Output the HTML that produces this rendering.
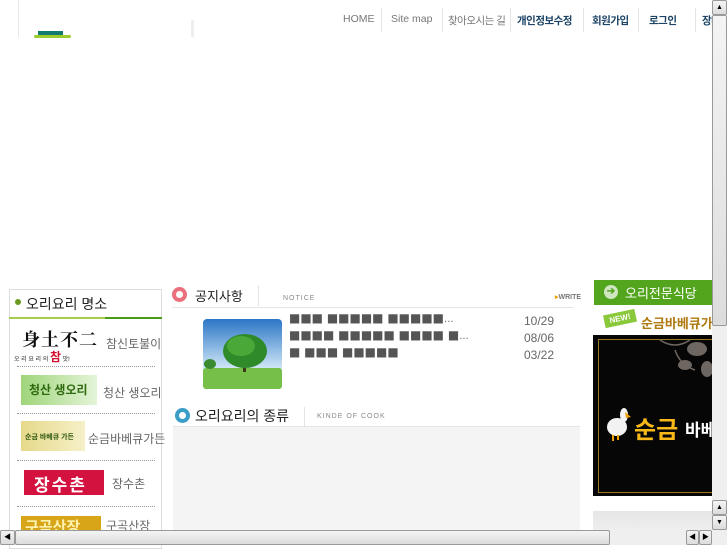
<!DOCTYPE html>
<html><head><meta charset="utf-8"><style>
*{margin:0;padding:0;box-sizing:border-box}
body{width:727px;height:545px;overflow:hidden;background:#fff;position:relative;font-family:"Liberation Sans","Noto Sans CJK KR",sans-serif;}
.a{position:absolute;white-space:nowrap}
.nav{font-size:10.5px;top:13px;color:#777}
.navb{font-size:10.5px;top:13px;color:#1d4466;font-weight:bold;letter-spacing:-0.5px}
.sep{position:absolute;top:8px;width:1px;height:24px;background:#e4e4e4}
.dot{position:absolute;left:17px;width:138px;border-top:1px dotted #999}
.it{font-size:12px;color:#666}
.sq{font-size:12px;color:#555;letter-spacing:0px;font-family:"DejaVu Sans",sans-serif;line-height:14px}
.dt{font-size:12px;color:#666}
.sb{background:linear-gradient(#f4f4f4,#dcdcdc);border:1px solid #999;border-radius:2px;position:absolute}
</style></head><body>
<!-- header -->
<div class="a" style="left:18px;top:0;width:1px;height:37px;background:#e8e8e8"></div>
<div class="a" style="left:38px;top:31px;width:25px;height:4px;background:#127a6e"></div>
<div class="a" style="left:34px;top:35px;width:37px;height:3px;background:#9ccc2c;border-radius:2px"></div>
<div class="a" style="left:191px;top:20px;width:3px;height:17px;background:#eee"></div>
<div class="a nav" style="left:343px">HOME</div>
<div class="sep" style="left:381px"></div>
<div class="a nav" style="left:391px">Site map</div>
<div class="sep" style="left:442px"></div>
<div class="a nav" style="left:448px;letter-spacing:-0.5px">찾아오시는 길</div>
<div class="sep" style="left:510px"></div>
<div class="a navb" style="left:517px">개인정보수정</div>
<div class="sep" style="left:583px"></div>
<div class="a navb" style="left:592px">회원가입</div>
<div class="sep" style="left:638px"></div>
<div class="a navb" style="left:649px">로그인</div>
<div class="sep" style="left:695px"></div>
<div class="a navb" style="left:702px">장바</div>

<!-- left box -->
<div class="a" style="left:9px;top:289px;width:153px;height:260px;border:1px solid #ddd;background:#fff"></div>
<div class="a" style="left:15px;top:299px;width:6px;height:6px;border-radius:50%;background:#6a9a1e"></div>
<div class="a" style="left:26px;top:294px;font-size:14px;color:#222">오리요리 명소</div>
<div class="a" style="left:9px;top:317px;width:96px;height:2px;background:#a8cf4c"></div>
<div class="a" style="left:105px;top:317px;width:57px;height:2px;background:#4a9a1a"></div>
<div class="a" style="left:22px;top:326px;font-size:18px;font-weight:bold;color:#111;font-family:'Noto Serif CJK SC',serif;letter-spacing:1px">身土不二</div>
<div class="a" style="left:14px;top:348px;font-size:6px;color:#222">오 리 요 리 의 <span style="color:#d0102e;font-size:12px;font-weight:bold">참</span> 맛!</div>
<div class="a it" style="left:106px;top:335px">참신토불이</div>
<div class="dot" style="top:366px"></div>
<div class="a" style="left:21px;top:375px;width:76px;height:30px;background:linear-gradient(90deg,#9fd57a,#e4f4d8);color:#2f6a10;font-size:12px;font-weight:bold;padding:6px 0 0 8px">청산 생오리</div>
<div class="a it" style="left:103px;top:384px">청산 생오리</div>
<div class="dot" style="top:413px"></div>
<div class="a" style="left:21px;top:421px;width:64px;height:30px;background:linear-gradient(90deg,#e6d98a,#f6f0c8);color:#2f5a10;font-size:7px;font-weight:bold;padding:11px 0 0 4px">순금 바베큐 가든</div>
<div class="a it" style="left:88px;top:430px">순금바베큐가든</div>
<div class="dot" style="top:460px"></div>
<div class="a" style="left:24px;top:470px;width:80px;height:25px;background:#d4123f;color:#fff;font-size:17px;font-weight:bold;padding:1px 0 0 10px;letter-spacing:2px">장수촌</div>
<div class="a it" style="left:112px;top:475px">장수촌</div>
<div class="dot" style="top:506px"></div>
<div class="a" style="left:21px;top:516px;width:80px;height:14px;background:#d8a418;overflow:hidden;color:#fff3b0;font-size:15px;font-weight:bold;padding:0 0 0 4px">구곡산장</div>
<div class="a it" style="left:106px;top:517px">구곡산장</div>

<!-- notice -->
<div class="a" style="left:172px;top:287px;width:15px;height:15px;border-radius:50%;border:4px solid #e9707c;background:#fff"></div>
<div class="a" style="left:195px;top:286px;font-size:13px;color:#222">공지사항</div>
<div class="a" style="left:258px;top:285px;width:1px;height:21px;background:#e4e4e4"></div>
<div class="a" style="left:283px;top:295px;font-size:7px;color:#888;letter-spacing:1px">NOTICE</div>
<div class="a" style="left:555px;top:293px;font-size:7px;color:#777;font-weight:bold"><span style="color:#f0a000">▸</span>WRITE</div>
<div class="a" style="left:172px;top:307px;width:402px;height:1px;background:#e6e6e6"></div>
<svg class="a" style="left:203px;top:319px" width="79" height="70"><defs><linearGradient id="s" x1="0" y1="0" x2="0" y2="1"><stop offset="0" stop-color="#2b76c6"/><stop offset=".7" stop-color="#cfe6f6"/></linearGradient></defs><rect width="79" height="70" rx="4" fill="url(#s)"/><rect y="49" width="79" height="21" rx="3" fill="#76c04a"/><rect x="40" y="35" width="3" height="18" fill="#3a3a1a"/><ellipse cx="42" cy="32" rx="22" ry="17" fill="#2f8a2a"/><ellipse cx="38" cy="27" rx="14" ry="10" fill="#4aa838"/><ellipse cx="7" cy="45" rx="6" ry="5" fill="#3a8a30"/></svg>
<div class="a sq" style="left:289px;top:311px">■■■ ■■■■■ ■■■■■<span style="color:#666;font-size:10px">...</span></div>
<div class="a sq" style="left:289px;top:328px">■■■■ ■■■■■ ■■■■ ■<span style="color:#666;font-size:10px">...</span></div>
<div class="a sq" style="left:289px;top:345px">■ ■■■ ■■■■■</div>
<div class="a dt" style="left:524px;top:314px">10/29</div>
<div class="a dt" style="left:524px;top:331px">08/06</div>
<div class="a dt" style="left:524px;top:348px">03/22</div>

<div class="a" style="left:175px;top:408px;width:15px;height:15px;border-radius:50%;border:4px solid #3a9ec8;background:#fff"></div>
<div class="a" style="left:195px;top:406px;font-size:14px;color:#222">오리요리의 종류</div>
<div class="a" style="left:304px;top:407px;width:1px;height:19px;background:#e4e4e4"></div>
<div class="a" style="left:317px;top:413px;font-size:7px;color:#888;letter-spacing:1px">KINDE OF COOK</div>
<div class="a" style="left:173px;top:426px;width:407px;height:1px;background:#e6e6e6"></div>
<div class="a" style="left:173px;top:427px;width:407px;height:103px;background:#f4f4f4"></div>

<!-- right -->
<div class="a" style="left:594px;top:280px;width:118px;height:25px;background:#52a51c"></div>
<div class="a" style="left:604px;top:285px;width:14px;height:14px;border-radius:50%;background:#cfe6c0;color:#52a51c;font-size:10px;font-weight:bold;text-align:center;line-height:14px">➔</div>
<div class="a" style="left:625px;top:283px;font-size:13px;color:#fff">오리전문식당</div>
<div class="a" style="left:604px;top:312px;width:32px;height:13px;background:#8ac83c;color:#fff;font-size:8px;font-weight:bold;transform:rotate(-12deg);text-align:center;line-height:13px">NEW!</div>
<div class="a" style="left:641px;top:313px;font-size:13px;font-weight:bold;color:#b07a10">순금바베큐가</div>
<div class="a" style="left:593px;top:335px;width:119px;height:161px;background:#060606"></div>
<div class="a" style="left:598px;top:339px;width:120px;height:154px;border:1px solid #9a7a1e"></div>
<svg class="a" style="left:655px;top:335px" width="57" height="45"><g fill="#6e6660"><ellipse cx="42" cy="14" rx="10" ry="7"/><ellipse cx="30" cy="30" rx="7" ry="5"/><ellipse cx="52" cy="34" rx="6" ry="8"/></g><path d="M5 5 q15 10 30 0 M20 15 q5 15 20 20" stroke="#6e6660" fill="none" stroke-width="1.5"/></svg>
<svg class="a" style="left:604px;top:405px" width="28" height="38"><ellipse cx="13" cy="22" rx="10" ry="9" fill="#f2f2f2"/><ellipse cx="20" cy="10" rx="4" ry="7" fill="#f2f2f2"/><path d="M21 7 l6 5 -5 1z" fill="#f0a000"/><path d="M9 30 v6 M14 30 v5" stroke="#f0a000" stroke-width="2"/></svg>
<div class="a" style="left:634px;top:410px;font-size:24px;font-weight:bold;color:#f7b818">순금</div>
<div class="a" style="left:685px;top:416px;font-size:17px;font-weight:bold;color:#fff">바베</div>
<div class="a" style="left:593px;top:511px;width:119px;height:19px;background:linear-gradient(#e6e6e6,#eee)"></div>

<!-- scrollbars -->
<div class="a" style="left:712px;top:0;width:15px;height:530px;background:#efefef"></div>
<div class="sb" style="left:712px;top:0;width:15px;height:15px;font-size:7px;text-align:center;line-height:13px">▲</div>
<div class="sb" style="left:712px;top:15px;width:15px;height:311px"></div>
<div class="sb" style="left:712px;top:500px;width:15px;height:15px;font-size:7px;text-align:center;line-height:13px">▲</div>
<div class="sb" style="left:712px;top:515px;width:15px;height:15px;font-size:7px;text-align:center;line-height:13px">▼</div>
<div class="a" style="left:0;top:530px;width:727px;height:15px;background:#efefef"></div>
<div class="sb" style="left:0;top:530px;width:15px;height:15px;font-size:7px;text-align:center;line-height:13px">◀</div>
<div class="sb" style="left:15px;top:530px;width:595px;height:15px"></div>
<div class="sb" style="left:686px;top:530px;width:13px;height:15px;font-size:7px;text-align:center;line-height:13px">◀</div>
<div class="sb" style="left:699px;top:530px;width:13px;height:15px;font-size:7px;text-align:center;line-height:13px">▶</div>
</body></html>
